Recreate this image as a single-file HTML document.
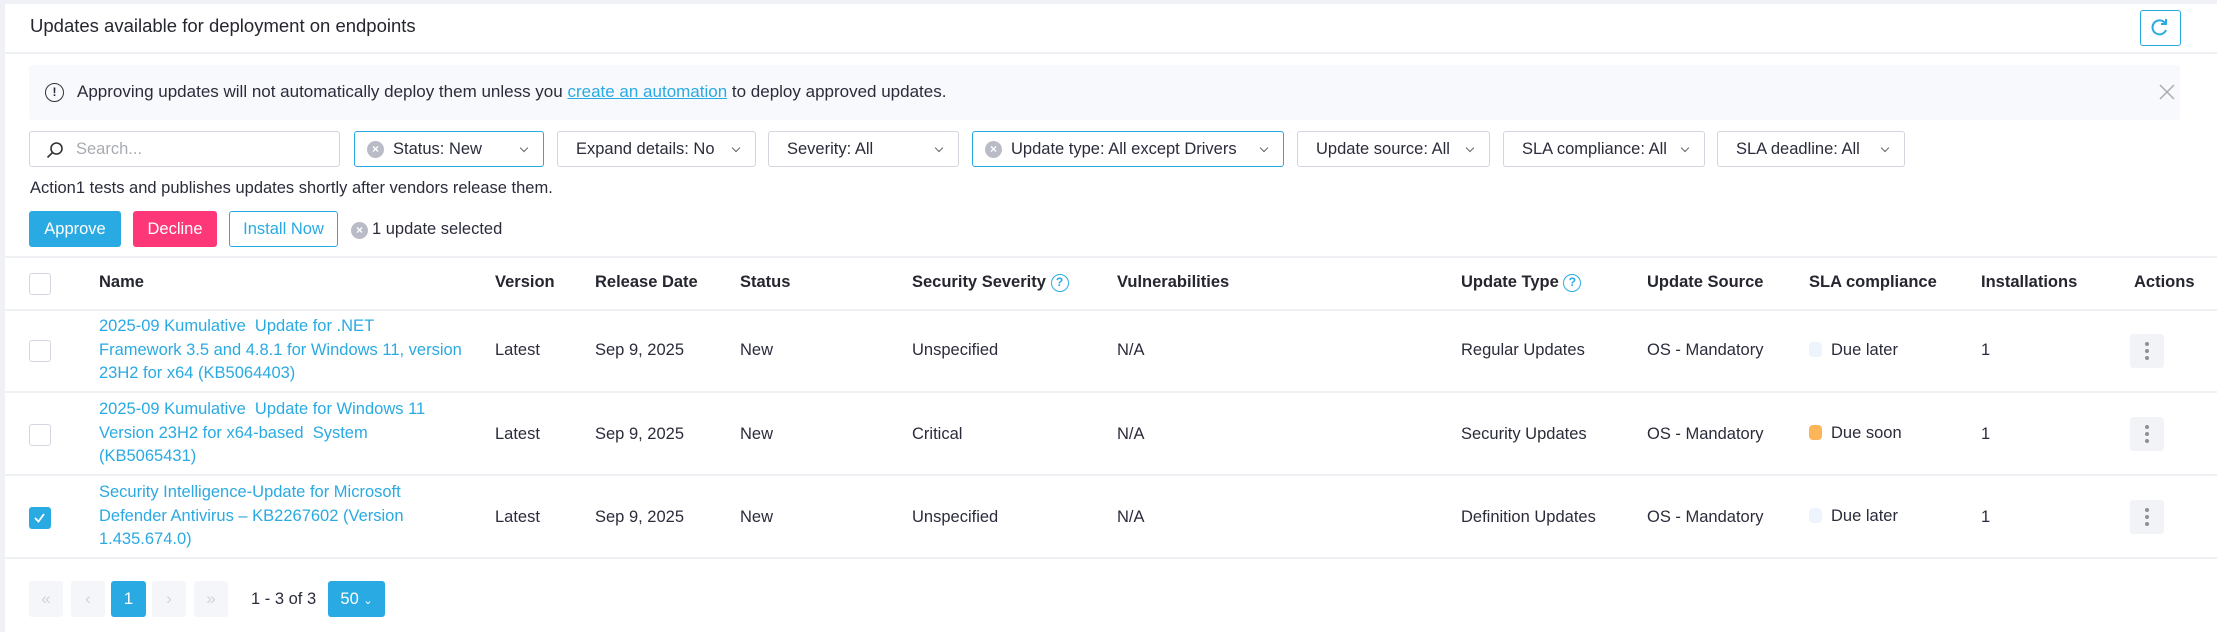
<!DOCTYPE html>
<html><head><meta charset="utf-8"><style>
*{box-sizing:border-box;margin:0;padding:0}
body{width:2217px;height:632px;background:#fff;font-family:"Liberation Sans",sans-serif;color:#2b2c3b;position:relative;overflow:hidden;font-size:17px}
.a{position:absolute}
.box{position:absolute;border:1px solid #d4d5de;border-radius:3px;height:36px;top:131px;display:flex;align-items:center;padding-left:18px;font-size:16.5px;color:#2b2c3b}
.box.b{border-color:#2aaae2}
.chev{position:absolute;right:16px;top:13px;width:6px;height:6px;border-right:1px solid #666;border-bottom:1px solid #666;transform:rotate(45deg)}
.xc{display:inline-block;width:17px;height:17px;border-radius:50%;background:#b9bcc6;color:#fff;font-size:12px;line-height:17px;text-align:center;font-weight:bold;margin-right:9px}
.th{position:absolute;top:273px;font-weight:bold;font-size:16.5px;color:#25262f}
.hl{position:absolute;left:5px;right:0;height:2px;background:#eef0f4}
.cell{position:absolute;font-size:16.5px;color:#2b2c3b}
.name{position:absolute;left:99px;width:420px;color:#2aaae2;font-size:16.5px;line-height:23.5px;white-space:nowrap}
.cb{position:absolute;left:29px;width:22px;height:22px;border:1.5px solid #d4d5de;border-radius:3px;background:#fff}
.keb{position:absolute;left:2130px;width:34px;height:34px;background:#f1f3f6;border-radius:3px}
.keb i{position:absolute;left:15px;width:4px;height:4px;border-radius:50%;background:#8d8f99}
.dot{display:inline-block;width:13px;height:15px;border-radius:4px;margin-right:9px;vertical-align:-2px}
.pg{position:absolute;top:581px;width:34px;height:36px;background:#f4f6fa;border-radius:3px;color:#cfd3dc;text-align:center;line-height:36px;font-size:17px}
</style></head><body>
<div class="a" style="left:0;top:0;width:2217px;height:4px;background:#f0f1f7"></div>
<div class="a" style="left:0;top:0;width:5px;height:632px;background:#f0f1f7"></div>
<div class="a" style="left:30px;top:15px;font-size:18.5px;color:#25262f">Updates available for deployment on endpoints</div>
<div class="a" style="left:2140px;top:10px;width:41px;height:36px;border:1.5px solid #2aaae2;border-radius:3px">
<svg width="38" height="33" viewBox="0 0 38 33"><path d="M24 12 A7 7 0 1 0 25 19" fill="none" stroke="#2aaae2" stroke-width="2"/><path d="M25 8 L25 13 L20 13" fill="none" stroke="#2aaae2" stroke-width="2"/></svg></div>
<div class="hl" style="top:52px;height:2px"></div>
<div class="a" style="left:29px;top:65px;width:2151px;height:55px;background:#f8f9fc;border-radius:3px"></div>
<div class="a" style="left:45px;top:83px;width:19px;height:19px;border:1.6px solid #333;border-radius:50%;font-size:12px;font-weight:bold;text-align:center;line-height:16px">!</div>
<div class="a" style="left:77px;top:82px;font-size:17px">Approving updates will not automatically deploy them unless you <span style="color:#2aaae2;text-decoration:underline">create an automation</span> to deploy approved updates.</div>
<svg class="a" style="left:2159px;top:84px" width="16" height="16"><path d="M1 1L15 15M15 1L1 15" stroke="#a9abb3" stroke-width="1.5"/></svg>

<div class="box" style="left:29px;width:311px;color:#a9abb3;padding-left:46px"><svg class="a" style="left:16px;top:9px" width="18" height="18"><circle cx="10.5" cy="7.5" r="5.5" fill="none" stroke="#333" stroke-width="1.6"/><path d="M6.5 11.5L1.5 16.5" stroke="#333" stroke-width="1.6"/></svg>Search...</div>
<div class="box b" style="left:354px;width:190px;padding-left:12px"><span class="xc">×</span>Status: New<span class="chev"></span></div>
<div class="box" style="left:557px;width:199px">Expand details: No<span class="chev"></span></div>
<div class="box" style="left:768px;width:191px">Severity: All<span class="chev"></span></div>
<div class="box b" style="left:972px;width:312px;padding-left:12px"><span class="xc">×</span>Update type: All except Drivers<span class="chev"></span></div>
<div class="box" style="left:1297px;width:193px">Update source: All<span class="chev"></span></div>
<div class="box" style="left:1503px;width:202px">SLA compliance: All<span class="chev"></span></div>
<div class="box" style="left:1717px;width:188px">SLA deadline: All<span class="chev"></span></div>

<div class="a" style="left:30px;top:179px;font-size:16.5px">Action1 tests and publishes updates shortly after vendors release them.</div>
<div class="a" style="left:29px;top:211px;width:92px;height:36px;background:#2aaae2;border-radius:3px;color:#fff;text-align:center;line-height:36px;font-size:16.5px">Approve</div>
<div class="a" style="left:133px;top:211px;width:84px;height:36px;background:#fe3878;border-radius:3px;color:#fff;text-align:center;line-height:36px;font-size:16.5px">Decline</div>
<div class="a" style="left:229px;top:211px;width:109px;height:36px;border:1px solid #2aaae2;border-radius:3px;color:#2aaae2;text-align:center;line-height:34px;font-size:16.5px">Install Now</div>
<div class="a" style="left:351px;top:220px;font-size:16.5px"><span class="xc" style="margin-right:4px">×</span>1 update selected</div>

<div class="hl" style="top:256px"></div>
<div class="cb" style="top:273px"></div>
<div class="th" style="left:99px">Name</div>
<div class="th" style="left:495px">Version</div>
<div class="th" style="left:595px">Release Date</div>
<div class="th" style="left:740px">Status</div>
<div class="th" style="left:912px">Security Severity <span style="display:inline-block;width:18px;height:18px;border:1.5px solid #2aaae2;border-radius:50%;color:#2aaae2;font-size:12px;text-align:center;line-height:15px;vertical-align:1px">?</span></div>
<div class="th" style="left:1117px">Vulnerabilities</div>
<div class="th" style="left:1461px">Update Type <span style="display:inline-block;width:18px;height:18px;border:1.5px solid #2aaae2;border-radius:50%;color:#2aaae2;font-size:12px;text-align:center;line-height:15px;vertical-align:1px">?</span></div>
<div class="th" style="left:1647px">Update Source</div>
<div class="th" style="left:1809px">SLA compliance</div>
<div class="th" style="left:1981px">Installations</div>
<div class="th" style="left:2134px">Actions</div>
<div class="hl" style="top:309px"></div>

<!-- row 1 -->
<div class="cb" style="top:340px"></div>
<div class="name" style="top:315px">2025-09 Kumulative&nbsp; Update for .NET<br>Framework 3.5 and 4.8.1 for Windows 11, version<br>23H2 for x64 (KB5064403)</div>
<div class="cell" style="left:495px;top:341px">Latest</div>
<div class="cell" style="left:595px;top:341px">Sep 9, 2025</div>
<div class="cell" style="left:740px;top:341px">New</div>
<div class="cell" style="left:912px;top:341px">Unspecified</div>
<div class="cell" style="left:1117px;top:341px">N/A</div>
<div class="cell" style="left:1461px;top:341px">Regular Updates</div>
<div class="cell" style="left:1647px;top:341px">OS - Mandatory</div>
<div class="cell" style="left:1809px;top:341px"><span class="dot" style="background:#eef4fb"></span>Due later</div>
<div class="cell" style="left:1981px;top:341px">1</div>
<div class="keb" style="top:334px"><i style="top:8px"></i><i style="top:15px"></i><i style="top:22px"></i></div>
<div class="hl" style="top:391px"></div>

<!-- row 2 -->
<div class="cb" style="top:424px"></div>
<div class="name" style="top:398px">2025-09 Kumulative&nbsp; Update for Windows 11<br>Version 23H2 for x64-based&nbsp; System<br>(KB5065431)</div>
<div class="cell" style="left:495px;top:425px">Latest</div>
<div class="cell" style="left:595px;top:425px">Sep 9, 2025</div>
<div class="cell" style="left:740px;top:425px">New</div>
<div class="cell" style="left:912px;top:425px">Critical</div>
<div class="cell" style="left:1117px;top:425px">N/A</div>
<div class="cell" style="left:1461px;top:425px">Security Updates</div>
<div class="cell" style="left:1647px;top:425px">OS - Mandatory</div>
<div class="cell" style="left:1809px;top:424px"><span class="dot" style="background:#fdb55a"></span>Due soon</div>
<div class="cell" style="left:1981px;top:425px">1</div>
<div class="keb" style="top:417px"><i style="top:8px"></i><i style="top:15px"></i><i style="top:22px"></i></div>
<div class="hl" style="top:474px"></div>

<!-- row 3 -->
<div class="cb" style="top:507px;background:#2aaae2;border-color:#2aaae2"><svg width="19" height="19" style="position:absolute;left:0;top:0"><path d="M5 10L8.5 13.5L14 6" fill="none" stroke="#fff" stroke-width="1.8"/></svg></div>
<div class="name" style="top:481px">Security Intelligence-Update for Microsoft<br>Defender Antivirus – KB2267602 (Version<br>1.435.674.0)</div>
<div class="cell" style="left:495px;top:508px">Latest</div>
<div class="cell" style="left:595px;top:508px">Sep 9, 2025</div>
<div class="cell" style="left:740px;top:508px">New</div>
<div class="cell" style="left:912px;top:508px">Unspecified</div>
<div class="cell" style="left:1117px;top:508px">N/A</div>
<div class="cell" style="left:1461px;top:508px">Definition Updates</div>
<div class="cell" style="left:1647px;top:508px">OS - Mandatory</div>
<div class="cell" style="left:1809px;top:507px"><span class="dot" style="background:#eef4fb"></span>Due later</div>
<div class="cell" style="left:1981px;top:508px">1</div>
<div class="keb" style="top:500px"><i style="top:8px"></i><i style="top:15px"></i><i style="top:22px"></i></div>
<div class="hl" style="top:557px"></div>

<div class="pg" style="left:29px">«</div>
<div class="pg" style="left:71px">‹</div>
<div class="pg" style="left:111px;width:35px;background:#2aaae2;color:#fff">1</div>
<div class="pg" style="left:152px">›</div>
<div class="pg" style="left:194px">»</div>
<div class="a" style="left:251px;top:590px;font-size:16.5px">1 - 3 of 3</div>
<div class="pg" style="left:328px;width:57px;background:#2aaae2;color:#fff;font-size:16.5px">50 <span style="font-size:11px">&#8964;</span></div>
</body></html>
